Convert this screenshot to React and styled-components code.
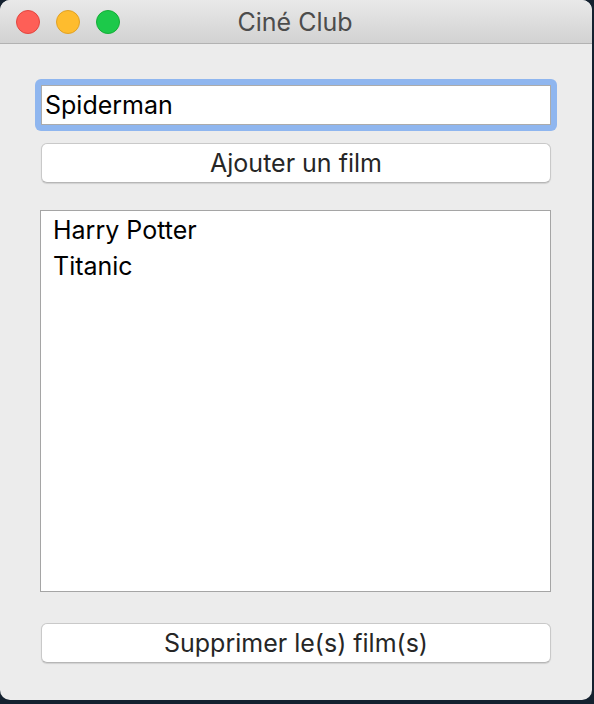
import React from "react";
import styled, { createGlobalStyle } from "styled-components";

const Global = createGlobalStyle`
  html, body { margin: 0; padding: 0; }
  body {
    background: #14212f;
    width: 594px;
    height: 704px;
    overflow: hidden;
    font-family: Inter, "Noto Sans", "Liberation Sans", sans-serif;
  }
`;

const Window = styled.div`
  width: 592px;
  height: 700px;
  background: #ececec;
  border-radius: 10px;
  overflow: hidden;
  display: flex;
  flex-direction: column;
`;

const TitleBar = styled.div`
  height: 43px;
  flex: none;
  background: linear-gradient(#e9e9e9, #d2d2d2);
  border-bottom: 1px solid #b2b2b2;
  display: grid;
  grid-template-columns: 1fr auto 1fr;
  align-items: center;
`;

const Lights = styled.div`
  display: flex;
  gap: 16px;
  padding-left: 16px;
`;

const Light = styled.span`
  width: 22px;
  height: 22px;
  border-radius: 50%;
  background: ${(p) => p.$color};
  border: 1px solid ${(p) => p.$edge};
`;

const Title = styled.div`
  font-size: 25px;
  color: #4c4c4c;
  margin-left: -2px;
`;

const Content = styled.div`
  flex: 1;
  display: flex;
  flex-direction: column;
  padding: 35px 41px 0 41px;
`;

const FocusRing = styled.div`
  margin: 0 -6px;
  padding: 6px;
  background: #8fb6ef;
  border-radius: 6px;
  display: flex;
`;

const Field = styled.input`
  flex: 1;
  height: 40px;
  box-sizing: border-box;
  border: 1px solid #ababab;
  background: #fff;
  font: inherit;
  font-size: 25px;
  color: #000;
  padding: 0 0 0 3px;
  outline: none;
`;

const Button = styled.button`
  height: 40px;
  margin-top: ${(p) => p.$top}px;
  border: 1px solid #c9c9c9;
  border-bottom-color: #b6b6b6;
  border-radius: 6px;
  background: #fff;
  box-shadow: 0 1px 1px rgba(0, 0, 0, 0.12);
  font: inherit;
  font-size: 25px;
  color: #262626;
  padding: 0;
`;

const List = styled.ul`
  list-style: none;
  margin: 27px 0 0 -1px;
  height: 382px;
  box-sizing: border-box;
  border: 1px solid #a5a5a5;
  background: #fff;
  padding: 1px 12px;
`;

const Item = styled.li`
  font-size: 25px;
  line-height: 36px;
  color: #000;
`;

export default function App() {
  const films = ["Harry Potter", "Titanic"];
  return (
    <>
      <Global />
      <Window>
        <TitleBar>
          <Lights>
            <Light $color="#fe5f57" $edge="#e2463f" />
            <Light $color="#febc2e" $edge="#e0a125" />
            <Light $color="#1cc94a" $edge="#15ad37" />
          </Lights>
          <Title>Ciné Club</Title>
          <div />
        </TitleBar>
        <Content>
          <FocusRing>
            <Field defaultValue="Spiderman" />
          </FocusRing>
          <Button $top={12}>Ajouter un film</Button>
          <List>
            {films.map((f) => (
              <Item key={f}>{f}</Item>
            ))}
          </List>
          <Button $top={31}>Supprimer le(s) film(s)</Button>
        </Content>
      </Window>
    </>
  );
}
